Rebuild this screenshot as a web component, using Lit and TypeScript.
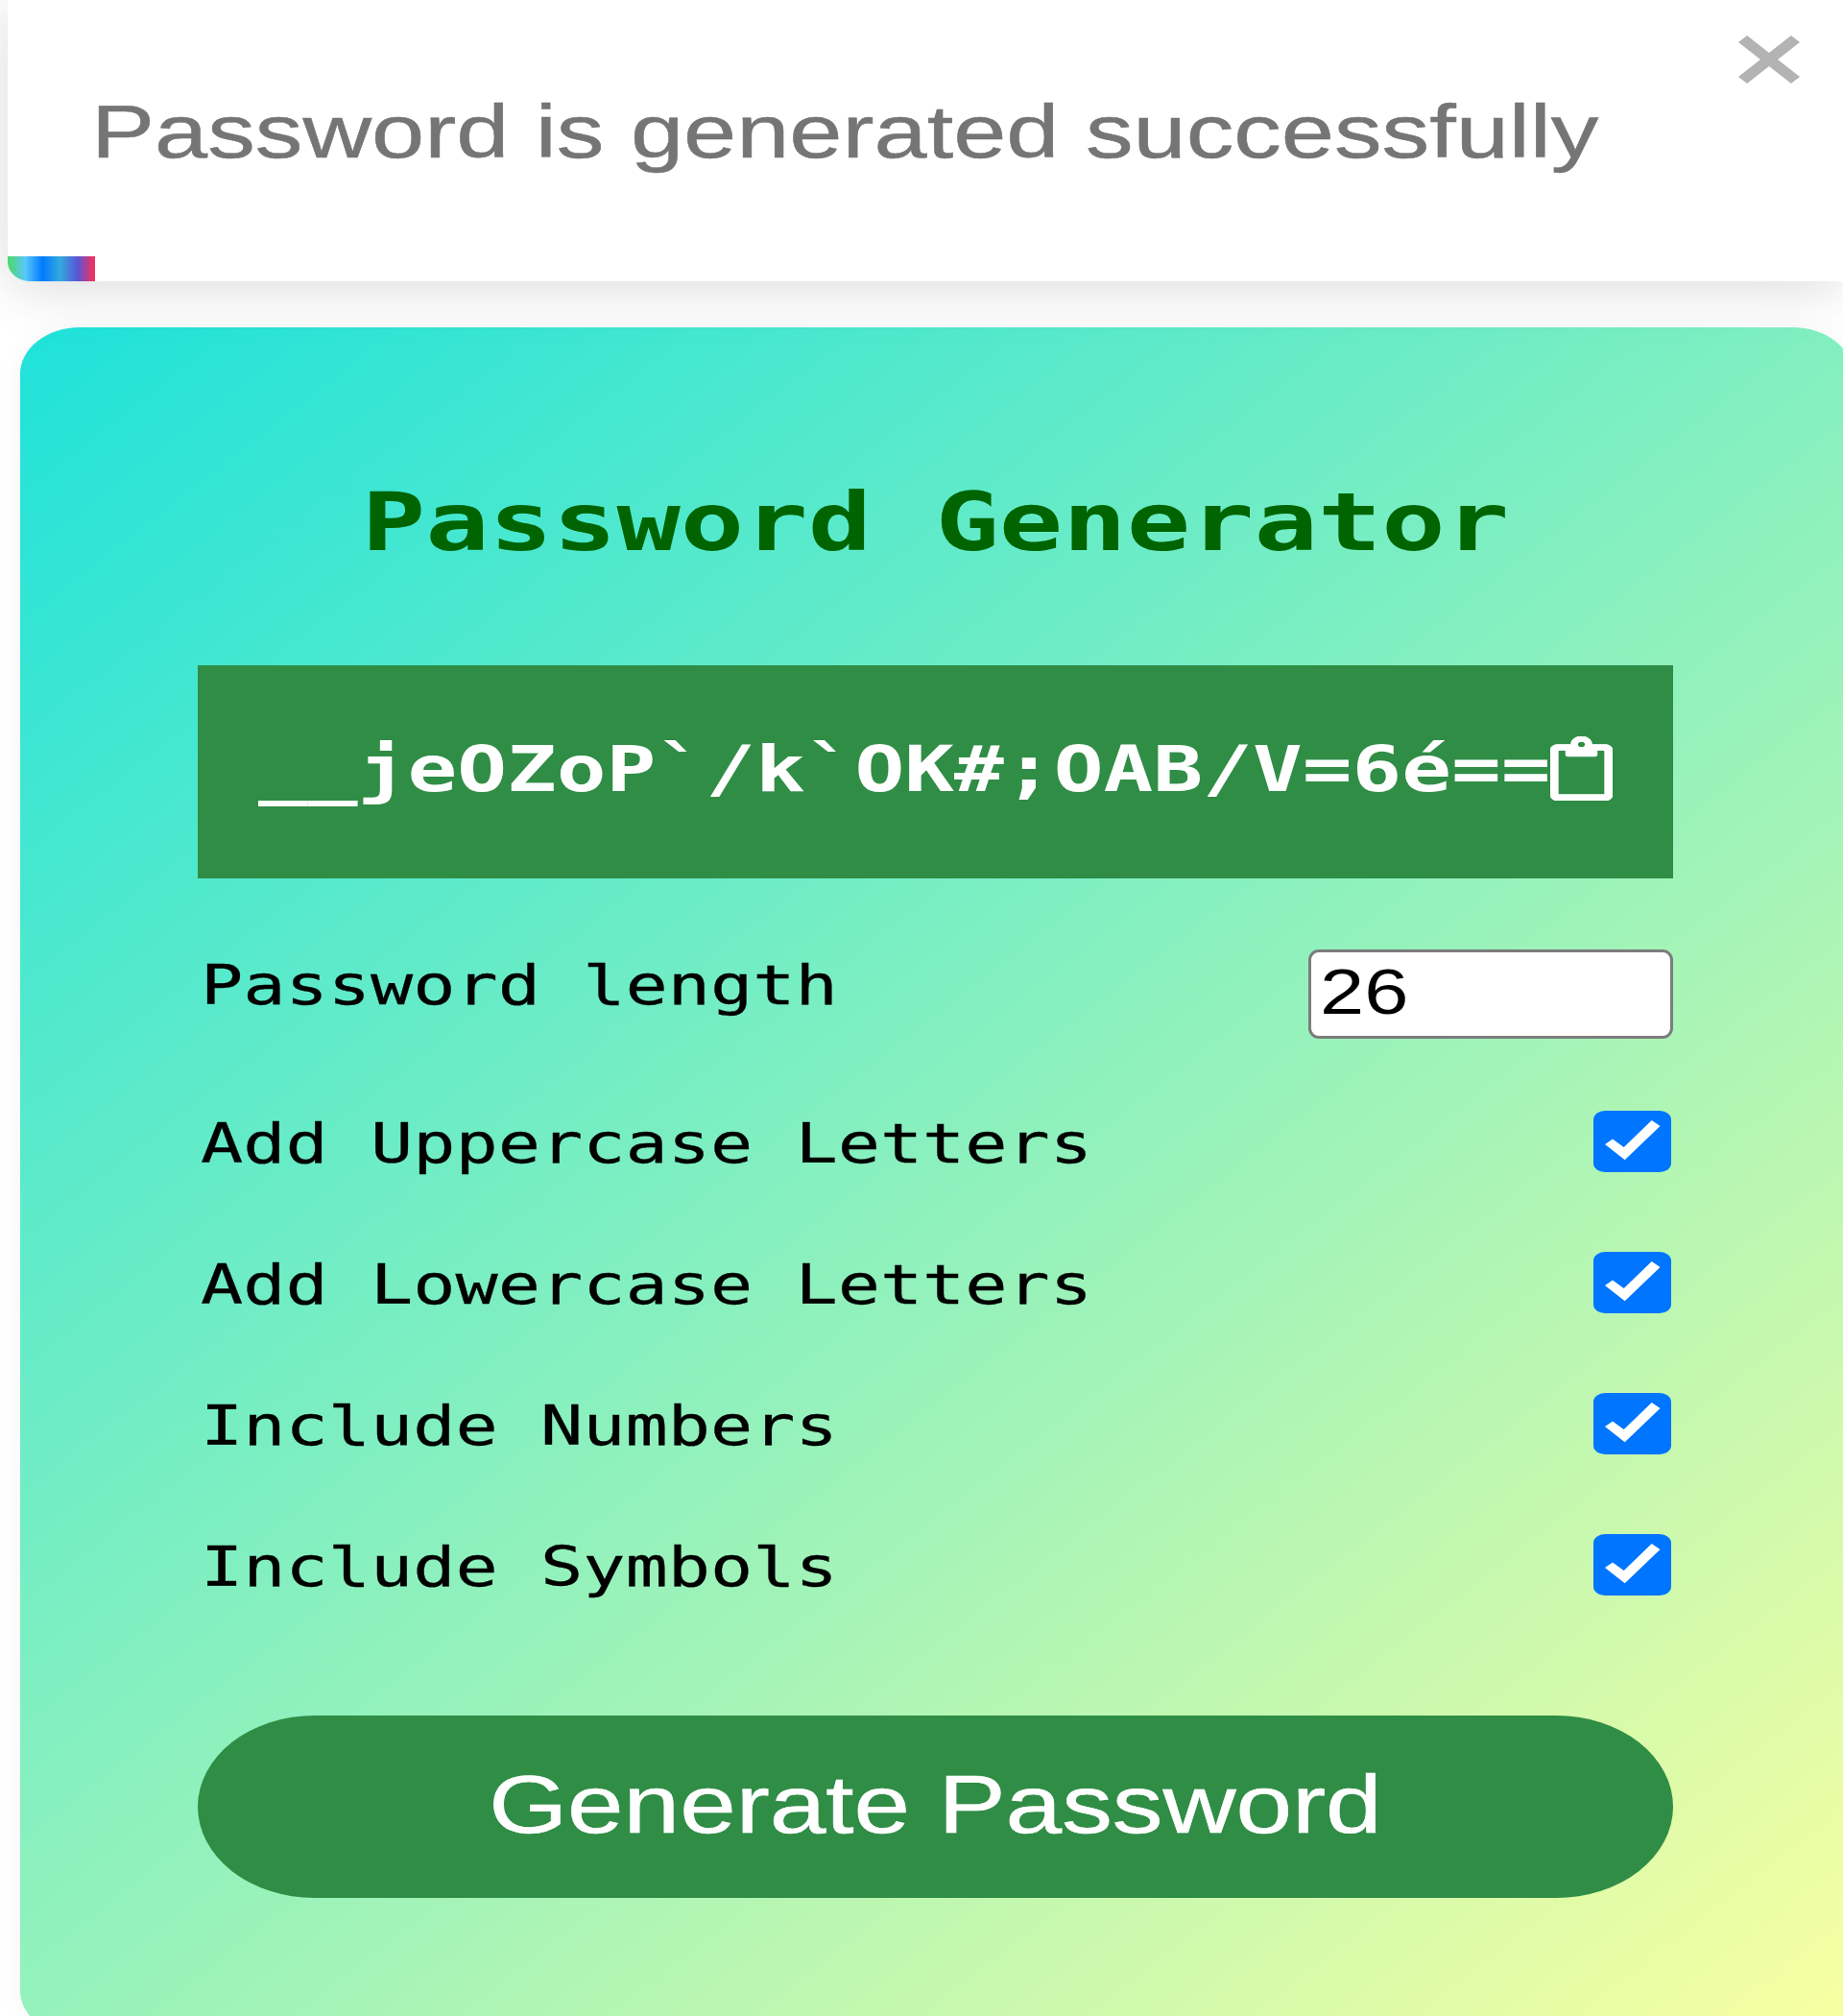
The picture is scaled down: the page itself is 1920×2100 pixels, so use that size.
import { LitElement, html, css } from "lit";
import { customElement, state } from "lit/decorators.js";

@customElement("app-root")
export class AppRoot extends LitElement {
  static styles = css`
    :host {
      display: block;
      width: 1920px;
      height: 2100px;
      overflow: hidden;
      background: #fff;
    }
    .page {
      display: flex;
      flex-direction: column;
      width: 1920px;
      height: 2100px;
      overflow: hidden;
    }
    .wide {
      display: inline-block;
      white-space: pre;
      transform-origin: 0 50%;
    }
    .toast {
      position: relative;
      z-index: 2;
      box-sizing: border-box;
      flex: none;
      display: flex;
      justify-content: space-between;
      align-items: flex-start;
      width: 1912px;
      height: 293px;
      margin-left: 8px;
      padding: 0 45px 0 87px;
      background: #fff;
      border-radius: 0 0 0 24px / 0 0 0 20px;
      box-shadow: 0 5px 52px rgba(0, 0, 0, 0.1), 0 10px 78px rgba(0, 0, 0, 0.05);
      font-family: "Liberation Sans", Arial, sans-serif;
      font-size: 78px;
      line-height: 275px;
      color: #757575;
      -webkit-text-stroke: 0.5px #757575;
    }
    .toast .wide {
      transform: scaleX(1.271);
    }
    .close {
      display: block;
      width: 64px;
      height: 50px;
      margin-top: 37.3px;
      fill: #b3b3b3;
    }
    .progress {
      position: absolute;
      left: 0;
      bottom: 0;
      width: 91px;
      height: 26px;
      border-bottom-left-radius: 24px 20px;
      background: linear-gradient(to right, #4cd964, #5ac8fa, #007aff, #34aadc, #5856d6, #ff2d55);
    }
    .card {
      box-sizing: border-box;
      flex: none;
      display: flex;
      flex-direction: column;
      width: 1909px;
      height: 1781px;
      margin: 48px 0 0 20.6px;
      padding: 103.3px 186.9px 0 185.4px;
      border-radius: 62px / 48.5px;
      background: linear-gradient(142.1deg, #1fe2da, #faffa1);
      box-shadow: 0 0 30px rgba(0, 0, 0, 0.04);
      font-family: Consolas, "DejaVu Sans Mono", monospace;
      color: #000;
    }
    .title {
      margin: 0 0 48.4px;
      text-align: center;
      font-size: 83.7px;
      font-weight: 700;
      line-height: 200px;
      color: #006400;
    }
    .title .wide {
      transform: scaleX(1.318);
      transform-origin: 50% 50%;
    }
    .result {
      box-sizing: border-box;
      flex: none;
      display: flex;
      justify-content: space-between;
      align-items: flex-start;
      height: 222px;
      padding: 0 62.5px 0 63px;
      background: #308d46;
      color: #fff;
      font-size: 65.8px;
      font-weight: 700;
      line-height: 217px;
    }
    .result .wide {
      transform: scaleX(1.3075);
    }
    .clip {
      display: block;
      width: 65px;
      height: 67px;
      margin-top: 74.6px;
      fill: #fff;
      stroke: #fff;
      stroke-width: 6px;
    }
    .row {
      display: flex;
      flex: none;
      justify-content: space-between;
      padding-left: 2.6px;
      font-size: 57.2px;
    }
    .row > .wide {
      transform: scaleX(1.285);
      -webkit-text-stroke: 0.3px #000;
    }
    .length {
      height: 127.5px;
      margin-top: 74.3px;
      align-items: flex-start;
      line-height: 75px;
    }
    .field {
      box-sizing: border-box;
      width: 380px;
      height: 93.5px;
      padding-left: 9px;
      border: 3px solid #7c7c7c;
      border-radius: 11px;
      background: #fff;
      font-family: "Liberation Sans", Arial, sans-serif;
      font-size: 67px;
      line-height: 82px;
    }
    .field .wide {
      transform: scaleX(1.24);
    }
    .option {
      height: 147px;
      align-items: center;
      line-height: 80px;
    }
    .option > .wide {
      padding-top: 2px;
    }
    .box {
      display: block;
      width: 81.5px;
      height: 63.5px;
      margin: 0 1.4px 1.6px 0;
      border-radius: 12px / 9.5px;
      background: #0075ff;
      fill: #fff;
    }
    .generate {
      flex: none;
      height: 190px;
      margin: 82.8px 0 0;
      padding: 0;
      border: 0;
      border-radius: 122px / 95px;
      background: #308d46;
      color: #fff;
      text-align: center;
      font-family: "Liberation Sans", Arial, sans-serif;
      font-size: 84.5px;
      line-height: 187px;
      display: flex;
      justify-content: center;
      align-items: flex-start;
      -webkit-text-stroke: 0.6px #fff;
    }
    .generate .wide {
      transform: scaleX(1.246);
      transform-origin: 50% 50%;
    }
  `;

  @state() private password = "__jeOZoP`/k`OK#;OAB/V=6é==";
  @state() private size = 26;

  private options = [
    "Add Uppercase Letters",
    "Add Lowercase Letters",
    "Include Numbers",
    "Include Symbols",
  ];

  render() {
    return html`
      <div class="page">
        <div class="toast" role="alert">
          <span class="wide">Password is generated successfully</span>
          <svg class="close" viewBox="1 3 10.46 10.46" preserveAspectRatio="none">
            <path d="M7.71 8.23l3.75 3.75-1.48 1.48-3.75-3.75-3.75 3.75L1 11.98l3.75-3.75L1 4.48 2.48 3l3.75 3.75L9.98 3l1.48 1.48-3.75 3.75z"></path>
          </svg>
          <div class="progress"></div>
        </div>
        <main class="card">
          <h2 class="title"><span class="wide">Password Generator</span></h2>
          <div class="result">
            <span class="wide">${this.password}</span>
            <svg class="clip" viewBox="0 0 384 512" preserveAspectRatio="none">
              <path d="M336 64h-80c0-35.3-28.7-64-64-64s-64 28.7-64 64H48C21.5 64 0 85.5 0 112v352c0 26.5 21.5 48 48 48h288c26.5 0 48-21.5 48-48V112c0-26.5-21.5-48-48-48zM192 40c13.3 0 24 10.7 24 24s-10.7 24-24 24-24-10.7-24-24 10.7-24 24-24zm144 418c0 3.3-2.7 6-6 6H54c-3.3 0-6-2.7-6-6V118c0-3.3 2.7-6 6-6h42v36c0 6.6 5.4 12 12 12h168c6.6 0 12-5.4 12-12v-36h42c3.3 0 6 2.7 6 6z"></path>
            </svg>
          </div>
          <div class="row length">
            <span class="wide">Password length</span>
            <div class="field"><span class="wide">${this.size}</span></div>
          </div>
          ${this.options.map(
            (label) => html`
              <div class="row option">
                <span class="wide">${label}</span>
                <svg class="box" viewBox="0 0 81.5 63.5" preserveAspectRatio="none">
                  <path d="M12 35L20 29.5L31.7 38L60.7 10L69.5 16L32.7 51.3Z"></path>
                </svg>
              </div>
            `,
          )}
          <button class="generate"><span class="wide">Generate Password</span></button>
        </main>
      </div>
    `;
  }
}
